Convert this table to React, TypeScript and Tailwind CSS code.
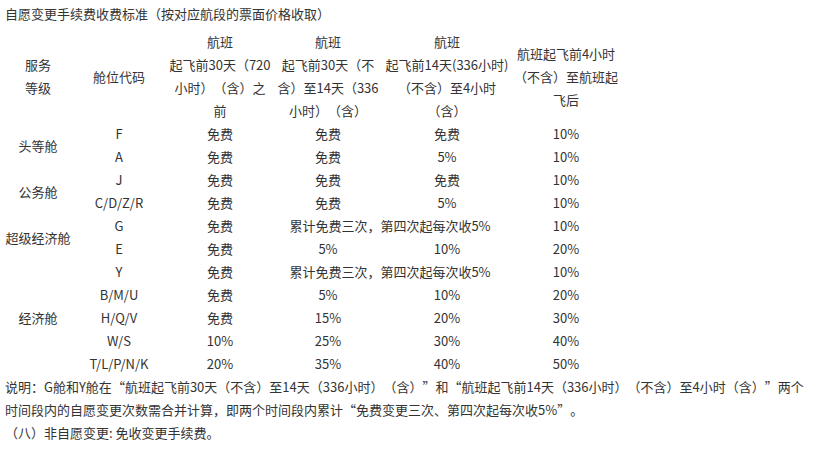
const rows: { cls?: string; span?: number; code: string; cells: string[]; merged?: boolean }[] = [
  { cls: "头等舱", span: 2, code: "F", cells: ["免费", "免费", "免费", "10%"] },
  { code: "A", cells: ["免费", "免费", "5%", "10%"] },
  { cls: "公务舱", span: 2, code: "J", cells: ["免费", "免费", "免费", "10%"] },
  { code: "C/D/Z/R", cells: ["免费", "免费", "5%", "10%"] },
  { cls: "超级经济舱", span: 2, code: "G", cells: ["免费", "累计免费三次，第四次起每次收5%", "10%"], merged: true },
  { code: "E", cells: ["免费", "5%", "10%", "20%"] },
  { cls: "经济舱", span: 5, code: "Y", cells: ["免费", "累计免费三次，第四次起每次收5%", "10%"], merged: true },
  { code: "B/M/U", cells: ["免费", "5%", "10%", "20%"] },
  { code: "H/Q/V", cells: ["免费", "15%", "20%", "30%"] },
  { code: "W/S", cells: ["10%", "25%", "30%", "40%"] },
  { code: "T/L/P/N/K", cells: ["20%", "35%", "40%", "50%"] },
];

const spanClass: Record<number, string> = {
  2: "row-span-2",
  5: "row-span-5",
};

function Cell({ children, className = "" }: { children: React.ReactNode; className?: string }) {
  return (
    <div className={`flex items-center justify-center text-center whitespace-nowrap ${className}`}>
      <div>{children}</div>
    </div>
  );
}

// full-width quote marks, as the reference font draws them
function Q({ c }: { c: string }) {
  return <span className="[font-feature-settings:'fwid']">{c}</span>;
}

export default function App() {
  return (
    <div
      lang="zh-CN"
      className="w-[830px] h-[452px] bg-white text-[#333] text-[13px] leading-[23px] overflow-hidden [text-spacing-trim:space-all]"
      style={{ fontFamily: '"Microsoft YaHei", "Noto Sans CJK SC", "Noto Sans", sans-serif' }}
    >
      {/* Title */}
      <p className="pl-[5px] pt-[2px] mb-[5px] whitespace-nowrap">自愿变更手续费收费标准（按对应航段的票面价格收取）</p>

      {/* Table */}
      <div className="ml-[7px] grid grid-cols-[62px_100px_102px_114px_124px_114px] grid-rows-[92px] auto-rows-[23px]">
        <Cell>
          服务
          <br />
          等级
        </Cell>
        <Cell>舱位代码</Cell>
        <Cell>
          航班
          <br />
          起飞前30天（720
          <br />
          小时）（含）之
          <br />
          前
        </Cell>
        <Cell>
          航班
          <br />
          起飞前30天（不
          <br />
          含）至14天（336
          <br />
          小时）（含）
        </Cell>
        <Cell>
          航班
          <br />
          起飞前14天(336小时)
          <br />
          （不含）至4小时
          <br />
          （含）
        </Cell>
        <Cell>
          航班起飞前4小时
          <br />
          （不含）至航班起
          <br />
          飞后
        </Cell>

        {rows.map((r) => (
          <>
            {r.cls && <Cell className={spanClass[r.span ?? 2]}>{r.cls}</Cell>}
            <Cell>{r.code}</Cell>
            {r.cells.map((c, i) => (
              <Cell key={i} className={r.merged && i === 1 ? "col-span-2" : ""}>
                {c}
              </Cell>
            ))}
          </>
        ))}
      </div>

      {/* Notes */}
      <div className="pl-[5px] whitespace-nowrap">
        <p>
          说明：G舱和Y舱在<Q c="“" />航班起飞前30天（不含）至14天（336小时）（含）<Q c="”" />和<Q c="“" />
          航班起飞前14天（336小时）（不含）至4小时（含）<Q c="”" />两个
        </p>
        <p>
          时间段内的自愿变更次数需合并计算，即两个时间段内累计<Q c="“" />免费变更三次、第四次起每次收5%<Q c="”" />。
        </p>
        <p>（八）非自愿变更: 免收变更手续费。</p>
      </div>
    </div>
  );
}
